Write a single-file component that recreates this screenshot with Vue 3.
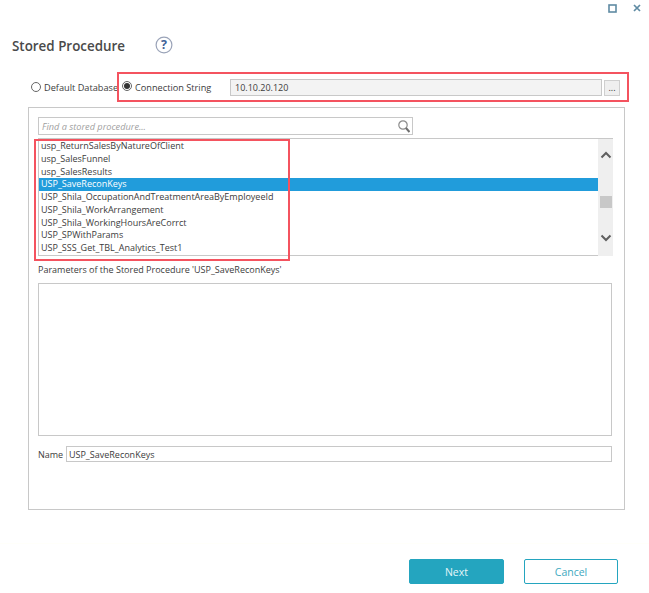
<script setup>
const rows = [
  { name: 'usp_ReturnSalesByNatureOfClient' },
  { name: 'usp_SalesFunnel' },
  { name: 'usp_SalesResults' },
  { name: 'USP_SaveReconKeys', selected: true },
  { name: 'USP_Shila_OccupationAndTreatmentAreaByEmployeeId' },
  { name: 'USP_Shila_WorkArrangement' },
  { name: 'USP_Shila_WorkingHoursAreCorrct' },
  { name: 'USP_SPWithParams' },
  { name: 'USP_SSS_Get_TBL_Analytics_Test1' }
]
</script>

<template>
  <div class="dialog">
    <div class="winbar">
      <svg class="winicon" width="9" height="9" viewBox="0 0 9 9"><rect x="1" y="1" width="7" height="7" fill="#fff" stroke="#5f8ba3" stroke-width="1.6"/></svg>
      <svg class="winicon close" width="8" height="8" viewBox="0 0 8 8"><path d="M1 1L7 7M7 1L1 7" stroke="#5f8ba3" stroke-width="1.7" fill="none"/></svg>
    </div>

    <div class="titlebar">
      <h1 class="title">Stored Procedure</h1>
      <svg class="help" width="18" height="18" viewBox="0 0 18 18">
        <circle cx="9" cy="9" r="7.9" fill="#fff" stroke="#9aa3b8" stroke-width="1.2"/>
        <text x="9" y="13.2" text-anchor="middle" class="helpq">?</text>
      </svg>
    </div>

    <div class="source">
      <span class="radio"></span>
      <span class="radiolabel first">Default Database</span>
      <span class="radio on"></span>
      <span class="radiolabel second">Connection String</span>
      <div class="conn">10.10.20.120</div>
      <button class="dots">...</button>
      <div class="mark markconn"></div>
    </div>

    <div class="panel">
      <div class="search">
        <span class="placeholder">Find a stored procedure...</span>
        <svg width="12" height="13" viewBox="0 0 12 13" class="lens">
          <circle cx="5" cy="5" r="4.2" fill="none" stroke="#8c8c8c" stroke-width="1.2"/>
          <path d="M8 8L11.5 12" stroke="#6e6e6e" stroke-width="2"/>
        </svg>
      </div>

      <div class="list">
        <div class="rows">
          <div v-for="row in rows" :key="row.name" class="row" :class="{ selected: row.selected }">{{ row.name }}</div>
        </div>
        <div class="scroll">
          <svg width="12" height="8" viewBox="0 0 12 8" class="arrow up"><path d="M1.5 6.5L6 2L10.5 6.5" fill="none" stroke="#5f5f5f" stroke-width="2"/></svg>
          <div class="thumb"></div>
          <svg width="12" height="8" viewBox="0 0 12 8" class="arrow down"><path d="M1.5 1.5L6 6L10.5 1.5" fill="none" stroke="#5f5f5f" stroke-width="2"/></svg>
        </div>
      </div>
      <div class="mark marklist"></div>

      <div class="paramlabel">Parameters of the Stored Procedure 'USP_SaveReconKeys'</div>
      <div class="params"></div>

      <div class="namerow">
        <span class="namelabel">Name</span>
        <div class="nameinput">USP_SaveReconKeys</div>
      </div>
    </div>

    <div class="footer">
      <button class="btn next">Next</button>
      <button class="btn cancel">Cancel</button>
    </div>
  </div>
</template>

<style scoped>
.dialog {
  position: relative;
  width: 649px;
  height: 593px;
  overflow: hidden;
  background: #fff;
  font-family: "Open Sans", "Noto Sans", sans-serif;
  font-size: 9px;
  color: #3c3c3c;
  display: flex;
  flex-direction: column;
}
.winbar {
  height: 17px;
  padding: 4px 8px 0 0;
  box-sizing: border-box;
  display: flex;
  justify-content: flex-end;
  align-items: flex-start;
}
.winicon { display: block; }
.winicon.close { margin-left: 16px; }
.titlebar {
  height: 50px;
  padding: 19px 0 0 12px;
  box-sizing: border-box;
  display: flex;
  align-items: flex-start;
}
.title {
  margin: 0;
  width: 143px;
  font-size: 13.4px;
  line-height: 20px;
  font-weight: 600;
  color: #4a4a4a;
}
.help { margin-top: 0; }
.helpq { font: 700 12.5px "Open Sans", sans-serif; fill: #3f6398; }
.source {
  position: relative;
  height: 40px;
  padding: 12px 0 0 31px;
  box-sizing: border-box;
  display: flex;
  align-items: flex-start;
}
.radio {
  width: 10px;
  height: 10px;
  margin-top: 3px;
  box-sizing: border-box;
  border: 1px solid #666;
  border-radius: 50%;
  background: #fff;
  flex: none;
  display: flex;
  align-items: center;
  justify-content: center;
}
.radio.on { margin-top: 2px; }
.radio.on::after {
  content: "";
  width: 6px;
  height: 6px;
  border-radius: 50%;
  background: #333;
}
.radiolabel { line-height: 18px; white-space: nowrap; font-size: 9.2px; }
.radiolabel.first { width: 78px; margin-left: 3px; }
.radiolabel.second { width: 95px; margin-left: 3px; }
.conn {
  width: 372px;
  height: 17px;
  padding-left: 4px;
  box-sizing: border-box;
  border: 1px solid #c8c8c8;
  background: #f3f3f3;
  line-height: 16px;
}
.dots {
  width: 16px;
  height: 16px;
  margin: 1px 0 0 2px;
  padding: 0;
  box-sizing: border-box;
  border: 1px solid #cfcfcf;
  background: #efefef;
  font: 9px/14px "Open Sans", sans-serif;
  color: #333;
}
.mark {
  position: absolute;
  box-sizing: border-box;
  border: 2px solid #f4535f;
  pointer-events: none;
}
.markconn { left: 117px; top: 5px; width: 512px; height: 30px; }
.panel {
  position: relative;
  width: 597px;
  height: 403px;
  margin-left: 28px;
  padding: 9px 12px 0 9px;
  box-sizing: border-box;
  border: 1px solid #c8c8c8;
}
.search {
  width: 375px;
  height: 18px;
  padding: 0 2px 0 3px;
  box-sizing: border-box;
  border: 1px solid #c8c8c8;
  display: flex;
  align-items: center;
  justify-content: space-between;
}
.placeholder { color: #a0a0a0; font-style: italic; font-size: 9.2px; }
.lens { display: block; }
.list {
  width: 575px;
  height: 118px;
  margin-top: 3px;
  box-sizing: border-box;
  border-top: 1px solid #c8c8c8;
  border-left: 1px solid #c8c8c8;
  border-bottom: 1px solid #c8c8c8;
  display: flex;
}
.rows { flex: 1; padding-top: 1px; min-width: 0; }
.row {
  height: 12.75px;
  line-height: 12.75px;
  padding-left: 2px;
  white-space: nowrap;
}
.row.selected { background: #219cdb; color: #fff; }
.scroll {
  width: 15px;
  margin-bottom: -1px;
  background: #efefef;
  display: flex;
  flex-direction: column;
  align-items: center;
}
.arrow { display: block; flex: none; }
.arrow.up { margin-top: 12px; }
.thumb {
  width: 12px;
  height: 12px;
  margin-top: 37px;
  background: #c8c8c8;
}
.arrow.down { margin-top: 26px; }
.marklist { left: 5px; top: 31px; width: 256px; height: 122px; }
.paramlabel { margin-top: 7px; line-height: 14px; }
.params {
  width: 574px;
  height: 153px;
  margin-top: 6px;
  box-sizing: border-box;
  border: 1px solid #c8c8c8;
}
.namerow {
  margin-top: 10px;
  display: flex;
  align-items: center;
}
.namelabel { width: 28px; }
.nameinput {
  width: 547px;
  height: 16px;
  padding-left: 2px;
  box-sizing: border-box;
  border: 1px solid #c8c8c8;
  line-height: 15px;
}
.footer {
  flex: 1;
  margin-top: 33px;
  padding: 15px 31px 0 0;
  box-sizing: border-box;
  border-top: 1px solid #fffffa;
  display: flex;
  justify-content: flex-end;
  align-items: flex-start;
  gap: 20px;
}
.btn {
  height: 25px;
  padding: 0;
  box-sizing: border-box;
  border-radius: 2px;
  font: 10.5px "Open Sans", sans-serif;
}
.next { width: 95px; background: #24a5bf; border: 1px solid #24a5bf; color: #e6f6f9; }
.cancel { width: 94px; background: #fff; border: 1px solid #24a5bf; color: #3ea8c0; }
</style>
